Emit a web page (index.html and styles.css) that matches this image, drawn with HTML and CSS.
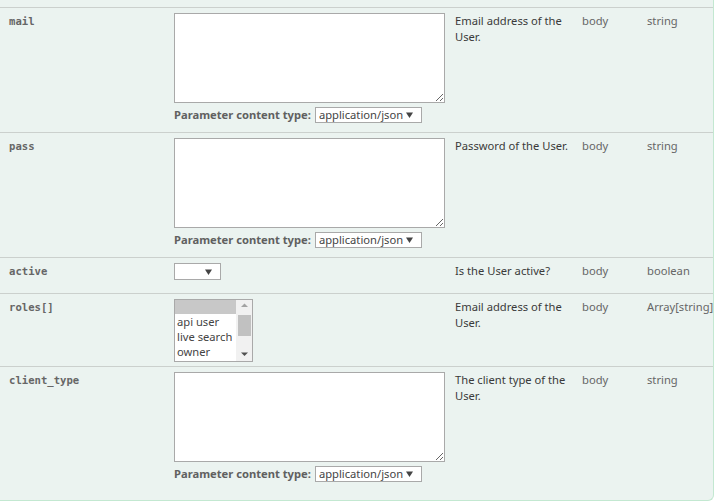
FILE: index.html
```html
<!DOCTYPE html>
<html>
<head>
<meta charset="utf-8">
<title>Parameters</title>
<link rel="stylesheet" href="styles.css">
</head>
<body>
<div class="operation">
  <div class="params">
    <div class="row">
      <div class="cell name">mail</div>
      <div class="cell value">
        <textarea class="body-textarea"></textarea>
        <div class="ct">
          <label class="ct-label">Parameter content type:</label>
          <select class="ct-select"><option>application/json</option></select>
        </div>
      </div>
      <div class="cell desc">Email address of the User.</div>
      <div class="cell ptype">body</div>
      <div class="cell dtype">string</div>
    </div>

    <div class="row">
      <div class="cell name">pass</div>
      <div class="cell value">
        <textarea class="body-textarea"></textarea>
        <div class="ct">
          <label class="ct-label">Parameter content type:</label>
          <select class="ct-select"><option>application/json</option></select>
        </div>
      </div>
      <div class="cell desc">Password of the User.</div>
      <div class="cell ptype">body</div>
      <div class="cell dtype">string</div>
    </div>

    <div class="row">
      <div class="cell name">active</div>
      <div class="cell value">
        <div class="short-wrap">
          <select class="bool-select"><option></option><option>true</option><option>false</option></select>
        </div>
      </div>
      <div class="cell desc">Is the User active?</div>
      <div class="cell ptype">body</div>
      <div class="cell dtype">boolean</div>
    </div>

    <div class="row row-roles">
      <div class="cell name">roles[]</div>
      <div class="cell value">
        <div class="listbox">
          <div class="options">
            <div class="opt opt-selected">&nbsp;</div>
            <div class="opt">api user</div>
            <div class="opt">live search</div>
            <div class="opt">owner</div>
          </div>
          <div class="scrollbar">
            <svg class="sb-up" width="15" height="10" viewBox="0 0 15 10"><path d="M4 7h7L7.5 3.5z" fill="#a3a3a3"/></svg>
            <div class="sb-thumb"></div>
            <svg class="sb-down" width="15" height="10" viewBox="0 0 15 10"><path d="M4 3.5h7L7.5 7z" fill="#505050"/></svg>
          </div>
        </div>
      </div>
      <div class="cell desc">Email address of the User.</div>
      <div class="cell ptype">body</div>
      <div class="cell dtype">Array[string]</div>
    </div>

    <div class="row">
      <div class="cell name">client_type</div>
      <div class="cell value">
        <textarea class="body-textarea"></textarea>
        <div class="ct">
          <label class="ct-label">Parameter content type:</label>
          <select class="ct-select"><option>application/json</option></select>
        </div>
      </div>
      <div class="cell desc">The client type of the User.</div>
      <div class="cell ptype">body</div>
      <div class="cell dtype">string</div>
    </div>
  </div>
</div>
</body>
</html>
```
FILE: styles.css
```css
html, body {
  margin: 0;
  padding: 0;
  background: #ffffff;
}

body {
  font-family: "Noto Sans", "Open Sans", sans-serif;
  font-size: 11.2px;
  line-height: 16px;
  color: #333333;
}

.operation {
  width: 713px;
  background: #ebf3f0;
  border-right: 1px solid #c3e8d1;
  border-bottom: 1px solid #c3e8d1;
  border-bottom-right-radius: 6px;
  padding: 7px 0 9px 0;
}

.row {
  display: grid;
  grid-template-columns: 168px 281px 127px 65px 72px;
  border-top: 1px solid #cbd0cd;
}

.cell {
  padding: 5px 6px 6px 6px;
  min-width: 0;
}

.row-roles .cell {
  padding-bottom: 4px;
}

.name {
  padding-left: 9px;
  font-family: "DejaVu Sans Mono", "Liberation Mono", monospace;
  font-size: 10.6px;
  font-weight: bold;
  color: #666666;
}

.desc {
  padding-right: 0;
  color: #3a3a3a;
}

.ptype, .dtype {
  color: #666666;
  white-space: nowrap;
}

.body-textarea {
  display: block;
  box-sizing: border-box;
  width: 271px;
  height: 90px;
  margin: 0;
  border: 1px solid #a9a9a9;
  background: #ffffff;
  padding: 2px;
  font-family: inherit;
  font-size: 12px;
}

.ct {
  height: 23px;
  display: flex;
  align-items: center;
  gap: 4px;
}

.ct-label {
  font-weight: bold;
  color: #606060;
  font-size: 11.2px;
}

.ct-select, .bool-select {
  -webkit-appearance: none;
  appearance: none;
  box-sizing: border-box;
  margin: 0;
  border: 1px solid #a9a9a9;
  border-radius: 0;
  background-color: #ffffff;
  background-image: url("data:image/svg+xml;utf8,<svg xmlns='http://www.w3.org/2000/svg' width='7' height='6'><path d='M0 0.5h7L3.5 6z' fill='%23444'/></svg>");
  background-repeat: no-repeat;
  font-family: inherit;
  font-size: 11.2px;
  line-height: 14px;
  color: #444444;
}

.ct-select {
  width: 107px;
  height: 16px;
  padding: 0 0 0 3px;
  background-position: right 8px center;
}

.short-wrap {
  height: 24px;
}

.bool-select {
  width: 47px;
  height: 17px;
  padding: 0 3px;
  background-position: right 8px center;
}

.listbox {
  box-sizing: border-box;
  width: 79px;
  height: 63px;
  border: 1px solid #a9a9a9;
  background: #ffffff;
  display: flex;
}

.options {
  flex: 1;
  min-width: 0;
}

.opt {
  height: 15px;
  line-height: 15px;
  padding-left: 2px;
  font-size: 11.2px;
  color: #444444;
  white-space: nowrap;
  overflow: hidden;
}

.opt-selected {
  background: #c8c8c8;
  height: 14px;
}

.scrollbar {
  width: 16px;
  background: #f1f1f1;
  display: flex;
  flex-direction: column;
  align-items: center;
}

.sb-up, .sb-down {
  display: block;
  flex: none;
}

.sb-thumb {
  width: 13px;
  height: 21px;
  background: #c1c1c1;
  margin-top: 5px;
}

.sb-down {
  margin-top: auto;
  margin-bottom: 2px;
}
```
